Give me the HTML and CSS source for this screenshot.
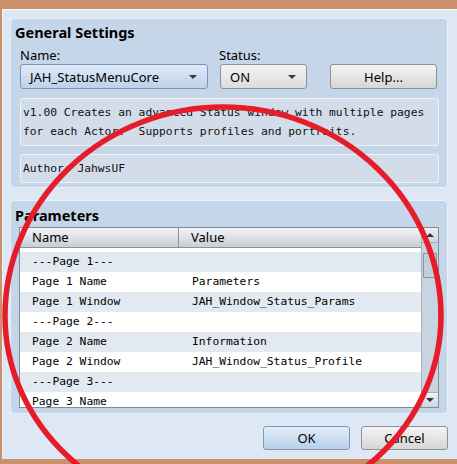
FILE: index.html
```html
<!DOCTYPE html>
<html lang="en">
<head>
    <meta charset="UTF-8">
    <title>Plugin Manager</title>
    <link rel="stylesheet" href="styles.css">
</head>
<body>

    <div class="window">
        <!-- General settings group -->
        <div class="group general">
            <div class="group-title">General Settings</div>
            <div class="field-grid">
                <label class="field-label">Name:</label>
                <label class="field-label status-label">Status:</label>
                <span></span>

                <div class="combo combo-focus name-combo">
                    <span>JAH_StatusMenuCore</span>
                    <span class="combo-arrow"></span>
                </div>
                <div class="combo status-combo">
                    <span>ON</span>
                    <span class="combo-arrow"></span>
                </div>
                <button class="btn help-btn">Help...</button>
            </div>

            <div class="text-box desc">v1.00 Creates an advanced Status window with multiple pages
for each Actor.  Supports profiles and portraits.</div>
            <div class="text-box author">Author: JahwsUF</div>
        </div>

        <!-- Parameter list -->
        <div class="group params">
            <div class="group-title">Parameters</div>
            <div class="list">
                <div class="list-main">
                    <div class="list-head">
                        <div class="col-name">Name</div>
                        <div class="col-value">Value</div>
                    </div>
                    <div class="list-body">
                        <div class="row row-hidden"><span></span><span></span></div>
                        <div class="row alt"><span>---Page 1---</span><span></span></div>
                        <div class="row"><span>Page 1 Name</span><span>Parameters</span></div>
                        <div class="row alt"><span>Page 1 Window</span><span>JAH_Window_Status_Params</span></div>
                        <div class="row"><span>---Page 2---</span><span></span></div>
                        <div class="row alt"><span>Page 2 Name</span><span>Information</span></div>
                        <div class="row"><span>Page 2 Window</span><span>JAH_Window_Status_Profile</span></div>
                        <div class="row alt"><span>---Page 3---</span><span></span></div>
                        <div class="row"><span>Page 3 Name</span><span></span></div>
                    </div>
                </div>
                <div class="scrollbar">
                    <div class="scroll-btn"><span class="tri-up"></span></div>
                    <div class="scroll-track">
                        <div class="scroll-thumb"></div>
                    </div>
                    <div class="scroll-btn"><span class="tri-down"></span></div>
                </div>
            </div>
        </div>

        <div class="dialog-buttons">
            <button class="btn btn-default">OK</button>
            <button class="btn">Cancel</button>
        </div>
    </div>

    <!-- red marker ring drawn over the dialog -->
    <svg class="marker" width="457" height="464" viewBox="0 0 457 464">
        <path d="M 5 316 A 218 209 0 0 1 441 316 A 218 200 0 0 1 5 316 Z" fill="none" stroke="#e61c2b" stroke-width="5.5"/>
    </svg>

</body>
</html>
```

FILE: styles.css
```css
body {
    margin: 0;
    background: #c9926d;
    font-family: 'Noto Sans', 'DejaVu Sans', sans-serif;
    font-size: 13px;
    color: #000;
    position: relative;
    width: 457px;
    height: 464px;
    overflow: hidden;
}

.window {
    margin: 9px 0 0 2px;
    height: 450px;
    box-sizing: border-box;
    background: #dde8f4;
    border-top: 1px solid #f5f8fc;
    border-left: 1px solid #eef3f9;
    padding: 8px 0 0 7px;
}

.group {
    width: 438px;
    box-sizing: border-box;
    background: #c5d6e9;
    border: 1px solid #e8eff8;
    border-radius: 5px;
    padding-left: 4px;
}

.group-title {
    font-weight: bold;
    font-size: 14.5px;
    line-height: 18px;
}

.general {
    height: 170px;
    padding-top: 4px;
}

.field-grid {
    display: grid;
    grid-template-columns: 200px 110px 107px;
    margin: 6px 0 0 5px;
}

.field-label {
    line-height: 16px;
    height: 17px;
}

.status-label {
    margin-left: -1px;
}

.combo {
    height: 25px;
    box-sizing: border-box;
    border: 1px solid #8d9299;
    border-radius: 3px;
    background: linear-gradient(#f3f3f3, #dcdcdc);
    display: flex;
    align-items: center;
    justify-content: space-between;
    padding: 0 10px 0 9px;
}

.name-combo {
    width: 188px;
}

.status-combo {
    width: 87px;
}

.combo-focus {
    border-color: #7894bb;
    background: linear-gradient(#dfeaf7, #bcd1ea);
}

.combo-arrow {
    width: 0;
    height: 0;
    border-left: 4px solid transparent;
    border-right: 4px solid transparent;
    border-top: 4px solid #3a3a3a;
}

.btn {
    font-family: 'Noto Sans', 'DejaVu Sans', sans-serif;
    font-size: 13px;
    color: #000;
    height: 25px;
    border: 1px solid #8d9299;
    border-radius: 3px;
    background: linear-gradient(#f4f4f4, #d6d6d6);
    padding: 0;
}

.btn-default {
    border-color: #7a98bf;
    background: linear-gradient(#e3eef9, #b7cfe9);
}

.text-box {
    width: 419px;
    margin-left: 5px;
    box-sizing: border-box;
    background: #d3dde9;
    border: 1px solid #eef3f9;
    border-radius: 3px;
    font-family: 'DejaVu Sans Mono', monospace;
    font-size: 11.3px;
    color: #111;
    white-space: pre;
    padding: 0 0 0 2px;
}

.desc {
    height: 48px;
    margin-top: 9px;
    line-height: 19px;
    padding-top: 4px;
}

.author {
    height: 29px;
    margin-top: 8px;
    line-height: 27px;
}

.params {
    margin-top: 12px;
    height: 214px;
    padding-top: 5px;
}

.list {
    margin: 3px 0 0 4px;
    width: 420px;
    height: 181px;
    box-sizing: border-box;
    border: 1px solid #828b96;
    background: #fff;
    display: flex;
}

.list-main {
    flex: 1;
    display: flex;
    flex-direction: column;
    overflow: hidden;
}

.list-head {
    height: 19px;
    flex: none;
    display: grid;
    grid-template-columns: 159px 1fr;
    background: linear-gradient(#f2f4f7, #c8ced6);
    border-bottom: 1px solid #8a929c;
    line-height: 19px;
}

.col-name {
    padding-left: 12px;
    border-right: 1px solid #8a929c;
}

.col-value {
    padding-left: 12px;
}

.list-body {
    flex: 1;
    overflow: hidden;
}

.row {
    display: grid;
    grid-template-columns: 160px 1fr;
    height: 20px;
    line-height: 20px;
    font-family: 'DejaVu Sans Mono', monospace;
    font-size: 11.3px;
    background: #fff;
}

.row span {
    padding-left: 12px;
    white-space: nowrap;
}

.row.alt {
    background: #e3e9f0;
}

.row-hidden {
    margin-top: -16px;
}

.scrollbar {
    width: 16px;
    flex: none;
    display: flex;
    flex-direction: column;
    background: #c9d4e1;
    border-left: 1px solid #a9b3bf;
}

.scroll-btn {
    height: 14px;
    display: flex;
    align-items: center;
    justify-content: center;
    background: linear-gradient(#eef1f5, #cfd6df);
    border-bottom: 1px solid #a6b0bc;
}

.scroll-btn:last-child {
    border-bottom: none;
    border-top: 1px solid #a6b0bc;
}

.tri-up {
    border-left: 4px solid transparent;
    border-right: 4px solid transparent;
    border-bottom: 4px solid #333;
}

.tri-down {
    border-left: 4px solid transparent;
    border-right: 4px solid transparent;
    border-top: 4px solid #333;
}

.scroll-track {
    flex: 1;
    padding: 10px 1px 0;
}

.scroll-thumb {
    height: 25px;
    box-sizing: border-box;
    border: 1px solid #8793a1;
    background: #c3cedb;
}

.dialog-buttons {
    display: flex;
    gap: 11px;
    margin: 12px 0 0 253px;
}

.dialog-buttons .btn {
    width: 87px;
    height: 24px;
}

.marker {
    position: absolute;
    left: 0;
    top: 0;
    pointer-events: none;
}
```
